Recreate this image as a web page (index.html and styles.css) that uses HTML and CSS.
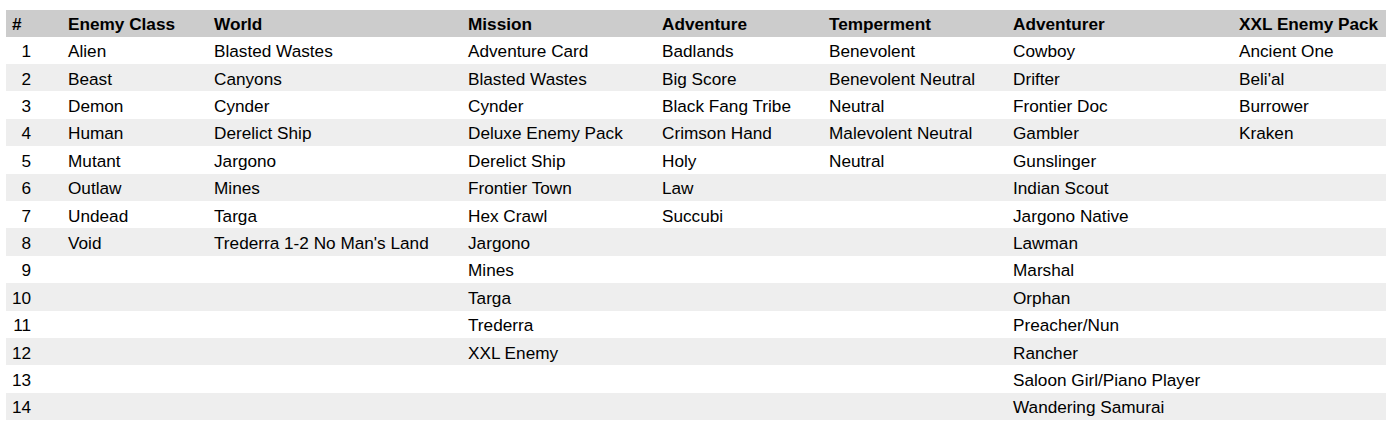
FILE: index.html
```html
<!DOCTYPE html>
<html>
<head>
<meta charset="utf-8">
<link rel="stylesheet" href="styles.css">
</head>
<body>
<div class="wrap">
<table class="grid">
<colgroup>
<col class="c-num"><col class="c-class"><col class="c-world"><col class="c-mission"><col class="c-adv"><col class="c-temp"><col class="c-advr"><col class="c-xxl">
</colgroup>
<thead>
<tr><th>#</th><th>Enemy Class</th><th>World</th><th>Mission</th><th>Adventure</th><th>Temperment</th><th>Adventurer</th><th>XXL Enemy Pack</th></tr>
</thead>
<tbody>
<tr><td class="num">1</td><td>Alien</td><td>Blasted Wastes</td><td>Adventure Card</td><td>Badlands</td><td>Benevolent</td><td>Cowboy</td><td>Ancient One</td></tr>
<tr><td class="num">2</td><td>Beast</td><td>Canyons</td><td>Blasted Wastes</td><td>Big Score</td><td>Benevolent Neutral</td><td>Drifter</td><td>Beli'al</td></tr>
<tr><td class="num">3</td><td>Demon</td><td>Cynder</td><td>Cynder</td><td>Black Fang Tribe</td><td>Neutral</td><td>Frontier Doc</td><td>Burrower</td></tr>
<tr><td class="num">4</td><td>Human</td><td>Derelict Ship</td><td>Deluxe Enemy Pack</td><td>Crimson Hand</td><td>Malevolent Neutral</td><td>Gambler</td><td>Kraken</td></tr>
<tr><td class="num">5</td><td>Mutant</td><td>Jargono</td><td>Derelict Ship</td><td>Holy</td><td>Neutral</td><td>Gunslinger</td><td></td></tr>
<tr><td class="num">6</td><td>Outlaw</td><td>Mines</td><td>Frontier Town</td><td>Law</td><td></td><td>Indian Scout</td><td></td></tr>
<tr><td class="num">7</td><td>Undead</td><td>Targa</td><td>Hex Crawl</td><td>Succubi</td><td></td><td>Jargono Native</td><td></td></tr>
<tr><td class="num">8</td><td>Void</td><td>Trederra 1-2 No Man's Land</td><td>Jargono</td><td></td><td></td><td>Lawman</td><td></td></tr>
<tr><td class="num">9</td><td></td><td></td><td>Mines</td><td></td><td></td><td>Marshal</td><td></td></tr>
<tr><td class="num">10</td><td></td><td></td><td>Targa</td><td></td><td></td><td>Orphan</td><td></td></tr>
<tr><td class="num">11</td><td></td><td></td><td>Trederra</td><td></td><td></td><td>Preacher/Nun</td><td></td></tr>
<tr><td class="num">12</td><td></td><td></td><td>XXL Enemy</td><td></td><td></td><td>Rancher</td><td></td></tr>
<tr><td class="num">13</td><td></td><td></td><td></td><td></td><td></td><td>Saloon Girl/Piano Player</td><td></td></tr>
<tr><td class="num">14</td><td></td><td></td><td></td><td></td><td></td><td>Wandering Samurai</td><td></td></tr>
</tbody>
</table>
</div>
</body>
</html>
```
FILE: styles.css
```css
html, body {
  margin: 0;
  padding: 0;
  background: #fff;
}
.wrap {
  padding: 10px 7px 10px 6px;
}
.grid {
  width: 1380px;
  table-layout: fixed;
  border-collapse: collapse;
  font-family: "Liberation Sans", Arial, sans-serif;
  font-size: 17.2px;
  color: #000;
}
.c-num { width: 56px; }
.c-class { width: 146px; }
.c-world { width: 254px; }
.c-mission { width: 194px; }
.c-adv { width: 167px; }
.c-temp { width: 184px; }
.c-advr { width: 226px; }
.c-xxl { width: 153px; }
.grid th,
.grid td {
  padding: 5.6px 6px 2.4px;
  line-height: 19.4px;
  height: 19.4px;
  text-align: left;
  white-space: nowrap;
  vertical-align: middle;
}
.grid thead th {
  background: #cccccc;
  font-weight: bold;
  padding-top: 4.8px;
  padding-bottom: 2.5px;
}
.grid tbody tr:nth-child(even) td {
  background: #eeeeee;
}
.grid td.num {
  text-align: right;
  padding-right: 31px;
}
```
